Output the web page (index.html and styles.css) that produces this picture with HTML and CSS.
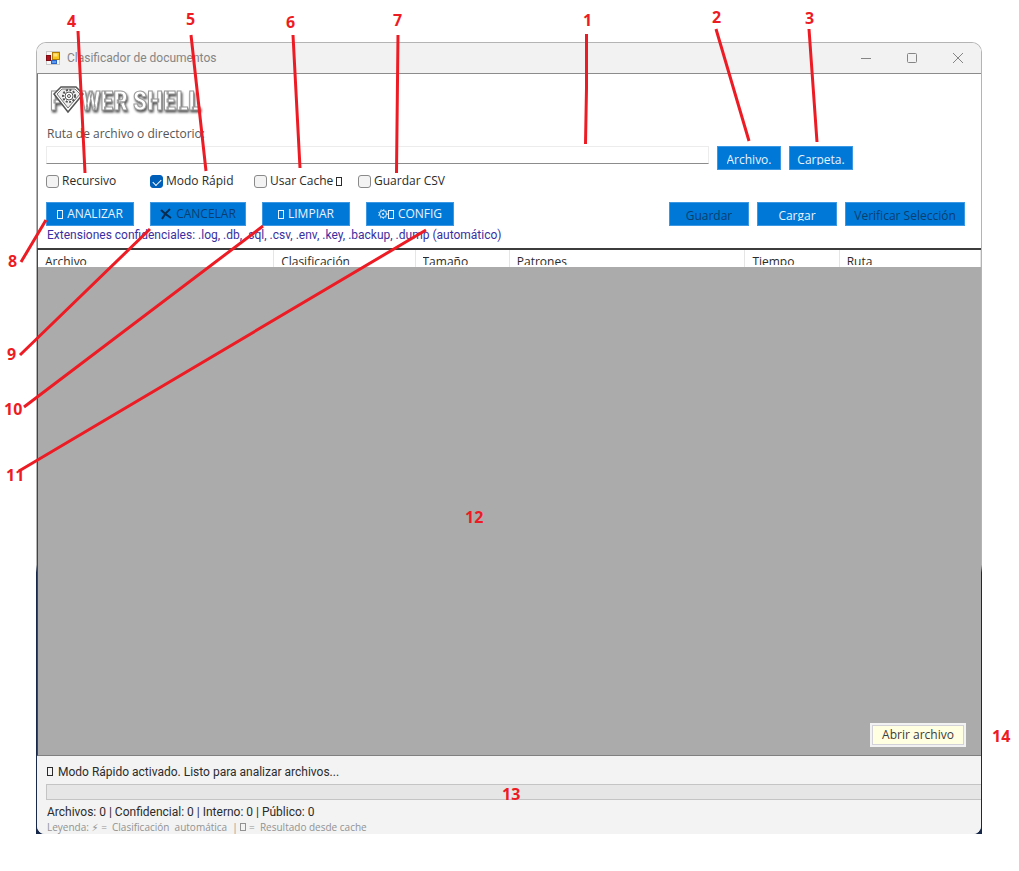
FILE: index.html
```html
<!DOCTYPE html>
<html lang="es">
<head>
<meta charset="utf-8">
<title>Clasificador de documentos</title>
<meta name="viewport" content="width=device-width, initial-scale=1">
<link rel="stylesheet" href="styles.css">
</head>
<body>
<main class="stage">
  <div class="frame">
    <section class="window">
      <header class="titlebar">
        <svg class="app-icon" viewBox="0 0 14 14" aria-hidden="true">
          <rect x="0.5" y="0.5" width="13" height="13" fill="#f7f7f7" stroke="#c9c9c9"/>
          <rect x="0.5" y="4.500" width="4" height="5" fill="#b3121d" stroke="#7d0d14"/>
          <rect x="6.500" y="1.500" width="7" height="7" fill="#f8c51c" stroke="#b07a08"/>
          <rect x="7.500" y="2.500" width="4" height="3" fill="#ffe27a"/>
          <rect x="5.500" y="9.500" width="5" height="3" fill="#5b98f2" stroke="#2864c8"/>
        </svg>
        <h1 class="title">Clasificador de documentos</h1>
        <div class="controls">
          <button class="control" type="button" aria-label="Minimizar"><svg viewBox="0 0 12 12"><path d="M1 6.500h10"/></svg></button>
          <button class="control" type="button" aria-label="Maximizar"><svg viewBox="0 0 12 12"><rect x="1.500" y="1.500" width="9" height="9" rx="1"/></svg></button>
          <button class="control" type="button" aria-label="Cerrar"><svg viewBox="0 0 12 12"><path d="M1 1l10 10M11 1L1 11"/></svg></button>
        </div>
      </header>

      <form class="toolbar">
        <svg class="logo" viewBox="0 0 160 42" role="img" aria-label="Power Shell">
          <g class="logo-face">
            <text x="4" y="28">P</text><text x="35" y="28">WER</text><text x="87" y="28">SHELL</text>
          </g>
          <path d="M15 5h15l7 7-15 18L8 12z" fill="#fff" stroke="#555" stroke-width="1.500"/>
          <path d="M16 7h13l5 5-12 14L11 12z" fill="#eee" stroke="#777"/>
          <circle cx="23" cy="14" r="6" fill="#fff" stroke="#555" stroke-width="2" stroke-dasharray="2 1.500"/>
          <circle cx="23" cy="14" r="4" fill="#fff" stroke="#555"/>
          <circle cx="23" cy="14" r="1.500" fill="#fff" stroke="#555"/>
        </svg>
        <label class="path-label" for="path">Ruta de archivo o directorio:</label>
        <div class="path-row">
          <input class="path" id="path" type="text">
          <button class="btn small" type="button"><span class="cut">Archivo.</span></button>
          <button class="btn small" type="button"><span class="cut">Carpeta.</span></button>
        </div>
        <div class="checks">
          <label class="check"><input type="checkbox">Recursivo</label>
          <label class="check"><input type="checkbox" checked>Modo Rápid</label>
          <label class="check"><input type="checkbox">Usar Cache <i class="box"></i></label>
          <label class="check"><input type="checkbox">Guardar CSV</label>
        </div>
        <div class="actions">
          <div class="group wide-gap">
            <button class="btn action" type="button"><i class="box"></i> ANALIZAR</button>
            <button class="btn cancel" type="button" disabled><svg class="cross" viewBox="0 0 12 12" aria-hidden="true"><path d="M1 2Q5 6 11 10M10 1Q5 5 2 11"/></svg> CANCELAR</button>
            <button class="btn action" type="button"><i class="box"></i> LIMPIAR</button>
            <button class="btn action" type="button"><svg class="gear" viewBox="0 0 10 10" aria-hidden="true"><circle cx="5" cy="5" r="3.500"/><circle class="teeth" cx="5" cy="5" r="4.500"/><circle class="hub" cx="5" cy="5" r="1"/></svg><i class="box"></i> CONFIG</button>
          </div>
          <div class="group">
            <button class="btn medium" type="button" disabled><span class="cut">Guardar</span></button>
            <button class="btn medium" type="button"><span class="cut">Cargar</span></button>
            <button class="btn large" type="button" disabled><span class="cut">Verificar Selección</span></button>
          </div>
        </div>
        <p class="extensions">Extensiones confidenciales: .log, .db, .sql, .csv, .env, .key, .backup, .dump (automático)</p>
      </form>

      <div class="results">
        <table class="grid">
          <colgroup><col class="w25"><col class="w15"><col class="w10"><col class="w25"><col class="w10"><col class="w15"></colgroup>
          <thead>
            <tr>
              <th><span>Archivo</span></th><th><span>Clasificación</span></th><th><span>Tamaño</span></th>
              <th><span>Patrones</span></th><th><span>Tiempo</span></th><th><span>Ruta</span></th>
            </tr>
          </thead>
        </table>
        <button class="open" type="button">Abrir archivo</button>
      </div>

      <footer class="status">
        <p class="message"><i class="box"></i> Modo Rápido activado. Listo para analizar archivos...</p>
        <progress class="progress" value="0" max="100" aria-label="Progreso"></progress>
        <p class="stats">Archivos: 0 | Confidencial: 0 | Interno: 0 | Público: 0</p>
        <p class="legend">Leyenda: <span class="bolt">⚡&#xFE0E;</span> =&nbsp; Clasificación&nbsp; automática&nbsp; | <i class="box"></i> =&nbsp; Resultado desde cache</p>
      </footer>
    </section>
  </div>

  <svg class="callouts" width="1019" height="871" viewBox="0 0 1019 871">
    <path d="M586.500 34V88L585.500 144M716 29L749 141M809 29L817 142M78 31L85 173M191 35L206 171M293 35L300 168M398 35L396.500 173M21 262L46 220M20 355L150 229M24 407L263 226M19 471L426 230"/>
    <g>
      <text x="583" y="26">1</text><text x="712" y="23">2</text><text x="805" y="24">3</text>
      <text x="67" y="27">4</text><text x="186" y="25">5</text><text x="286" y="28">6</text><text x="393" y="26">7</text>
      <text x="8" y="267">8</text><text x="7" y="360">9</text><text x="4" y="415">10</text><text x="6" y="481">11</text>
      <text x="465" y="523">12</text><text x="502" y="800">13</text><text x="992" y="742">14</text>
    </g>
  </svg>
</main>
</body>
</html>
```
FILE: styles.css
```css
* { box-sizing: border-box; }

body {
  margin: 0;
  background: #fff;
  color: #2b2b2b;
  font: 12px/16px "Open Sans", "Noto Sans", sans-serif;
}

p, h1 { margin: 0; }
button, input { font: inherit; }

.stage {
  position: relative;
  display: flex;
  min-height: 100vh;
  padding: 42px 37px 37px 36px;
}

.frame {
  display: flex;
  flex: 1;
  min-width: 0;
  border-radius: 10px 10px 0 0;
  background: linear-gradient(#b4b4b4 66%, #17284a 67%);
  padding: 1px 1px 0;
}

.window {
  display: flex;
  flex: 1;
  flex-direction: column;
  min-width: 0;
  overflow: hidden;
  border-radius: 9px 9px 8px 8px;
  background: #fff;
}

.titlebar {
  display: flex;
  align-items: center;
  height: 31px;
  padding-left: 9px;
  border-bottom: 1px solid #8c8c8c;
  background: #f2f2f2;
}

.app-icon { width: 14px; height: 14px; }

.title {
  flex: 1;
  margin-left: 7px;
  color: #858585;
  font-family: Roboto, sans-serif;
  font-size: 12px;
  font-weight: 400;
}

.controls { display: flex; }

.control {
  display: grid;
  place-items: center;
  width: 46px;
  height: 30px;
  padding: 0;
  border: 0;
  background: none;
}

.control svg {
  width: 12px;
  height: 12px;
  fill: none;
  stroke: #858585;
}

.toolbar {
  padding: 8px 16px 4px 8px;
  border-left: 1px solid #777;
}

.logo {
  display: block;
  width: 160px;
  height: 42px;
}

.logo text {
  font-family: "Roboto Condensed", "Open Sans", sans-serif;
  font-size: 26px;
  font-weight: 700;
}

.logo-face {
  fill: #fff;
  stroke: #999;
  filter: drop-shadow(1px 2px 1px #555);
}

.path-label {
  display: block;
  padding-left: 1px;
  color: #555;
  line-height: 20px;
}

.path-row {
  display: flex;
  gap: 8px;
  margin: 2px 112px 0 0;
}

.path {
  flex: 1;
  min-width: 0;
  height: 18px;
  border: 1px solid #ececec;
  border-bottom-color: #8c8c8c;
  background: #fff;
}

.btn {
  display: flex;
  align-items: center;
  justify-content: center;
  gap: 4px;
  height: 24px;
  padding: 0;
  border: 1px solid #3c98e2;
  background: #0078d7;
  color: #e8f3fc;
  white-space: nowrap;
}

.btn:disabled { color: #083e70; }
.small { width: 64px; }
.action { width: 88px; }
.cancel { width: 96px; }
.medium { width: 80px; }
.large { width: 120px; }

.cut {
  height: 14px;
  overflow: hidden;
  line-height: 18px;
}

.box {
  display: inline-block;
  width: 6px;
  height: 9px;
  border: 1px solid currentColor;
}

.checks { display: flex; }

.check {
  display: flex;
  align-items: center;
  gap: 3px;
  width: 104px;
  height: 22px;
  white-space: nowrap;
}

.check input {
  display: grid;
  place-items: center;
  width: 13px;
  height: 13px;
  margin: 0;
  appearance: none;
  border: 1px solid #8a8a8a;
  border-radius: 3px;
  background: #f3f3f3;
}

.check input:checked {
  border-color: #005fb8;
  background: #005fb8;
}

.check input:checked::after {
  content: "";
  width: 7px;
  height: 4px;
  border: solid #fff;
  border-width: 0 0 1px 1px;
  transform: rotate(-45deg);
}

.actions {
  display: flex;
  justify-content: space-between;
  margin-top: 10px;
}

.group { display: flex; gap: 8px; }
.wide-gap { gap: 16px; }

.cross {
  width: 12px;
  height: 12px;
  fill: none;
  stroke: #062c50;
  stroke-width: 2px;
}

.gear {
  width: 10px;
  height: 10px;
  margin-right: -4px;
  fill: none;
  stroke: currentColor;
}

.teeth { stroke-dasharray: 1 2; }
.hub { fill: currentColor; stroke: none; }

.extensions {
  padding-left: 1px;
  color: #3a2fa0;
  font-family: Roboto, sans-serif;
  line-height: 18px;
}

.results {
  position: relative;
  flex: 1;
  border-top: 2px solid #3c3c3c;
  border-bottom: 1px solid #808080;
  border-left: 1px solid #444;
  background: #ababab;
}

.grid {
  width: 100%;
  table-layout: fixed;
  border-collapse: collapse;
  background: #fff;
}

.w25 { width: 25%; }
.w15 { width: 15%; }
.w10 { width: 10%; }

.grid th {
  height: 17px;
  padding: 0 0 2px 7px;
  border-right: 1px solid #e5e5e5;
  font-weight: 400;
  text-align: left;
}

.grid span {
  display: block;
  height: 15px;
  overflow: hidden;
  line-height: 24px;
}

.open {
  position: absolute;
  right: 15px;
  bottom: 8px;
  width: 96px;
  height: 24px;
  padding: 0;
  border: 1px solid #f2f2f2;
  outline: 1px solid #d2d2d8;
  outline-offset: -3px;
  background: #ffffe1;
  box-shadow: inset 0 0 0 1px #f2f2f2;
  color: #3c3c3c;
}

.status {
  padding: 8px 0 0 9px;
  background: #f3f3f3;
}

.message, .stats {
  padding-left: 1px;
  font-family: Roboto, sans-serif;
}

.message .box { margin-right: 2px; }

.progress {
  display: block;
  width: 100%;
  height: 16px;
  margin: 4px 0;
  appearance: none;
  border: 1px solid #c4c4c4;
  border-right: 0;
  background: #e6e6e6;
}

.progress::-webkit-progress-bar { background: #e6e6e6; }

.legend {
  padding-left: 1px;
  color: #929292;
  font-size: 10px;
  line-height: 14px;
}

.legend .box { height: 8px; }

.bolt {
  font-family: "DejaVu Sans", sans-serif;
  line-height: 10px;
}

.callouts {
  position: absolute;
  top: 0;
  left: 0;
  pointer-events: none;
}

.callouts path {
  fill: none;
  stroke: #ed1c24;
  stroke-width: 3px;
}

.callouts text {
  fill: #ed1c24;
  font: 700 16px "Noto Sans", sans-serif;
}
```
